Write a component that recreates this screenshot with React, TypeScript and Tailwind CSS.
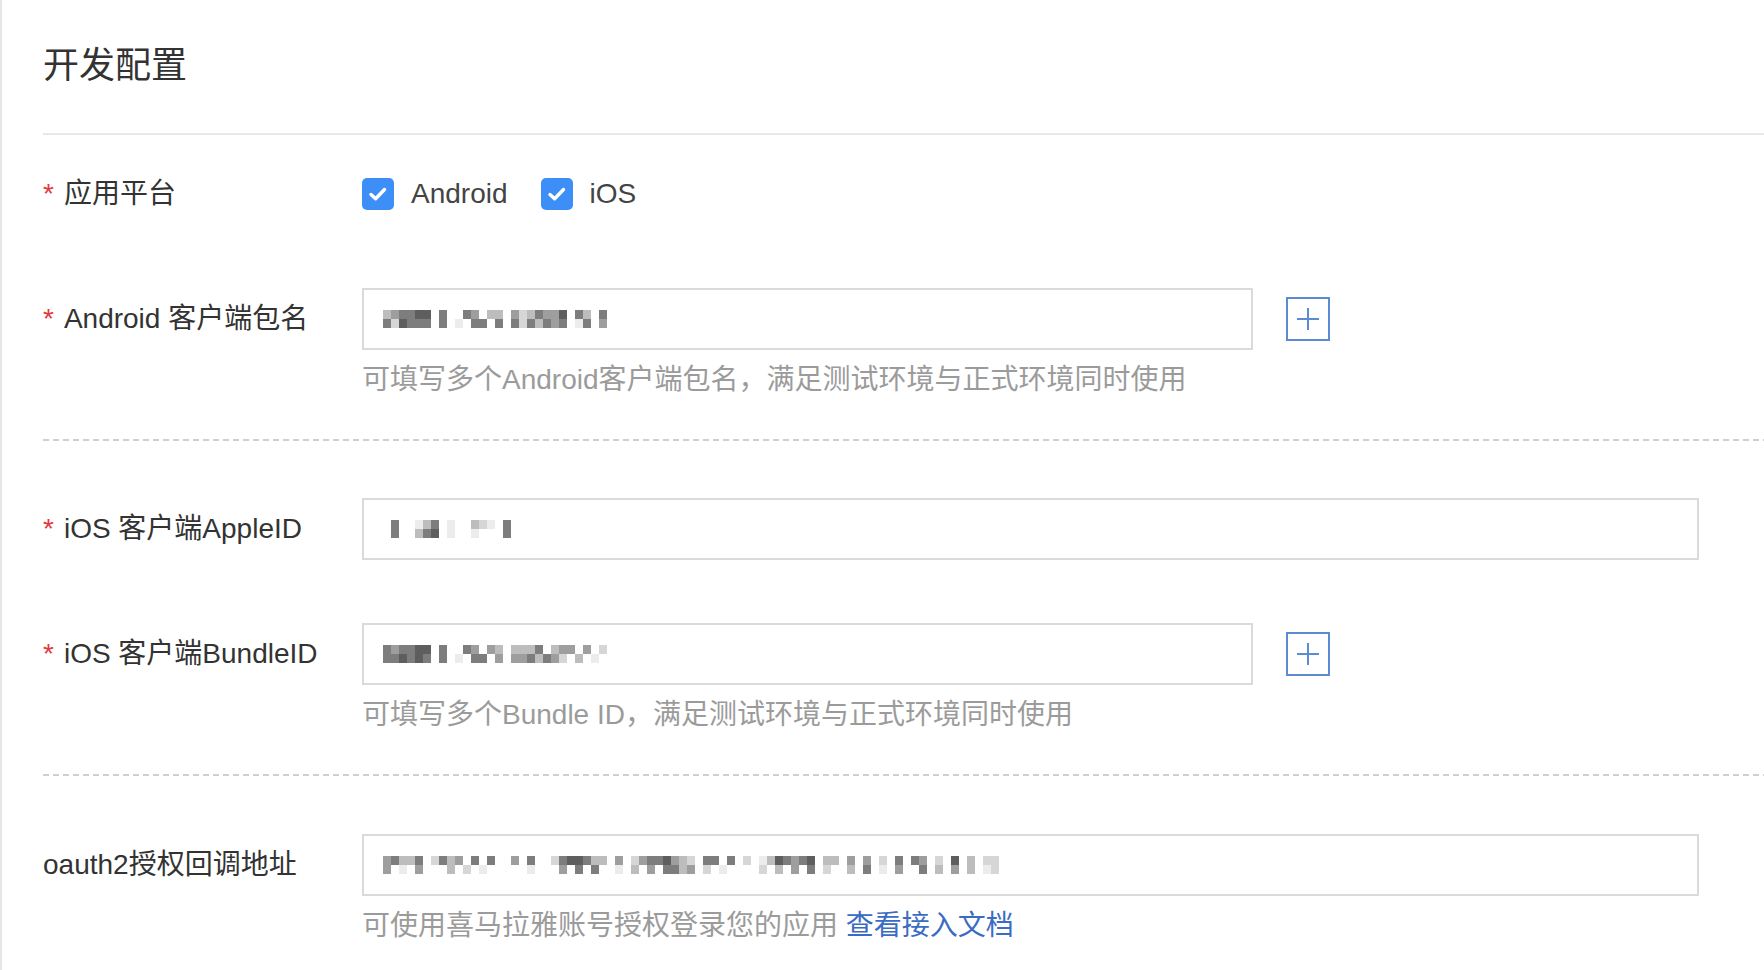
const shades = ['transparent', '#ececec', '#d6d6d6', '#bdbdbd', '#9e9e9e', '#7d7d7d', '#5e5e5e'];

// pixelated placeholder for the masked field values
function Mosaic({ rows }: { rows: string[] }) {
  return (
    <div className="flex flex-col blur-[0.4px]">
      {rows.map((row, i) => (
        <div key={i} className="flex">
          {row.split('').map((c, j) => (
            <span
              key={j}
              className="block w-[8px] h-[9px]"
              style={{ background: shades[c === ' ' ? 0 : Number(c)] }}
            />
          ))}
        </div>
      ))}
    </div>
  );
}

function Check({ label }: { label: string }) {
  return (
    <label className="flex items-center gap-[17px]">
      <span className="w-[32px] h-[32px] rounded-[5px] bg-[#3d8ef6] flex items-center justify-center">
        <svg width="24" height="24" viewBox="0 0 24 24" fill="none">
          <path d="M5 12.5l4.6 4.3 8.9-9.3" stroke="#fff" strokeWidth="3.4" strokeLinecap="round" strokeLinejoin="round" />
        </svg>
      </span>
      <span className="text-[28px] leading-[32px] text-[#444]">{label}</span>
    </label>
  );
}

function PlusBox() {
  return (
    <button className="ml-[33px] w-[44px] h-[44px] border-2 border-[#5d8bd3] flex items-center justify-center">
      <svg width="24" height="24" viewBox="0 0 24 24">
        <path d="M12 1v22M1 12h22" stroke="#5d8bd3" strokeWidth="2" />
      </svg>
    </button>
  );
}

function Label({ text, required = true }: { text: string; required?: boolean }) {
  return (
    <div className="w-[319px] shrink-0 h-[62px] leading-[62px] text-[28px] text-[#333] whitespace-nowrap">
      {required && <span className="text-[#e4393c] mr-[10px]">*</span>}
      {text}
    </div>
  );
}

function Field({ width, rows }: { width: string; rows: string[] }) {
  return (
    <div className={`${width} h-[62px] border-2 border-[#dadada] bg-white flex items-center pl-[19px]`}>
      <Mosaic rows={rows} />
    </div>
  );
}

function Dashed() {
  return <div className="h-[2px] bg-[linear-gradient(to_right,#cfcfcf_60%,transparent_60%)] bg-[length:10px_2px]" />;
}

export default function App() {
  return (
    <div className="min-h-screen bg-white font-['Liberation_Sans','Noto_Sans_CJK_SC',sans-serif] text-[#333]">
      <div className="min-h-[970px] border-l-2 border-[#e6e6e6] pl-[41px] pb-[20px]">
        <h1 className="pt-[41px] h-[91px] text-[36px] leading-[50px] text-[#333]">开发配置</h1>
        <div className="mt-[42px] h-[2px] bg-[#e8e8e8]" />

        {/* 应用平台 */}
        <div className="mt-[43px] flex items-center h-[32px]">
          <div className="w-[319px] shrink-0 text-[28px] leading-[32px] text-[#333]">
            <span className="text-[#e4393c] mr-[10px]">*</span>应用平台
          </div>
          <div className="flex items-center gap-[33px]">
            <Check label="Android" />
            <Check label="iOS" />
          </div>
        </div>

        {/* Android 包名 */}
        <div className="mt-[78px] flex items-start">
          <Label text="Android 客户端包名" />
          <div className="flex flex-col">
            <div className="flex items-center">
              <Field
                width="w-[891px]"
                rows={['345566 5  54 33 4235446 53 5', '526555 5 1 55 5 5253545 15 4']}
              />
              <PlusBox />
            </div>
            <p className="mt-[10px] text-[28px] leading-[40px] text-[#9b9b9b]">
              可填写多个Android客户端包名，满足测试环境与正式环境同时使用
            </p>
          </div>
        </div>

        <div className="mt-[39px]">
          <Dashed />
        </div>

        {/* AppleID */}
        <div className="mt-[57px] flex items-start">
          <Label text="iOS 客户端AppleID" />
          <Field width="w-[1337px]" rows={[' 5  135 1  321 5', ' 5  356 1  1   5']} />
        </div>

        {/* BundleID */}
        <div className="mt-[63px] flex items-start">
          <Label text="iOS 客户端BundleID" />
          <div className="flex flex-col">
            <div className="flex items-center">
              <Field
                width="w-[891px]"
                rows={['545566 5  54 43 3335 344 4 2', '556565 5 1 55 4 4453542 3 1']}
              />
              <PlusBox />
            </div>
            <p className="mt-[10px] text-[28px] leading-[40px] text-[#9b9b9b]">
              可填写多个Bundle ID，满足测试环境与正式环境同时使用
            </p>
          </div>
        </div>

        <div className="mt-[39px]">
          <Dashed />
        </div>

        {/* oauth2 */}
        <div className="mt-[58px] flex items-start">
          <Label text="oauth2授权回调地址" required={false} />
          <div className="flex flex-col">
            <Field
              width="w-[1337px]"
              rows={[
                '45335 2534 5 5  4 5  2566533 4 24556432 55 5 2 1365456 33 4 4 2 5 54 2 6 3 22',
                '4 1 4   3 2 1     1   4 5 5  1 3 4 5534 2 1    2 3 4 5 2  3 5 1 4  5 3 4 3 12',
              ]}
            />
            <p className="mt-[10px] text-[28px] leading-[40px] text-[#9b9b9b]">
              可使用喜马拉雅账号授权登录您的应用 <a className="text-[#3a6cc4]">查看接入文档</a>
            </p>
          </div>
        </div>
      </div>
    </div>
  );
}
